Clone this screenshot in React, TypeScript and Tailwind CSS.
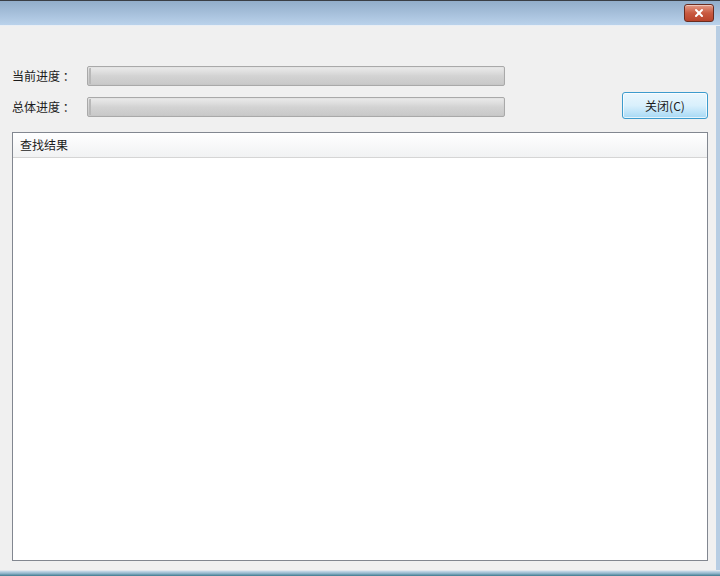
import { X } from "lucide-react";

const font = { fontFamily: '"Microsoft YaHei", "Noto Sans CJK SC", "Noto Sans", sans-serif' };

function Progress() {
  return (
    <div className="w-[418px] h-[20px] rounded-[2px] border border-[#a9a9a9] bg-gradient-to-b from-[#e4e4e4] via-[#d2d2d2] to-[#c6c6c6] p-px">
      <div className="h-full w-full rounded-[1px] border-l-2 border-[#b8b8b8] bg-gradient-to-b from-[#ececec]/60 via-[#d4d4d4]/40 to-[#cdcdcd]/40" />
    </div>
  );
}

export default function App() {
  return (
    <div
      className="w-[720px] h-[576px] flex flex-col overflow-hidden bg-[#f0f0f0] text-[12px] text-[#1b1b1b]"
      style={font}
    >
      {/* Title bar */}
      <div className="h-[25px] shrink-0 flex items-start justify-end border-t border-[#3a3e45] bg-gradient-to-b from-[#92adca] to-[#bad2eb] pr-[6px] pt-[3px]">
        <button className="w-[30px] h-[18px] flex items-center justify-center rounded-[3px] border border-[#6a2c20] bg-gradient-to-b from-[#e39a86] via-[#c95a41] to-[#b8432b] shadow-[inset_0_1px_0_rgba(255,255,255,0.45)]">
          <X className="w-[12px] h-[12px] text-white" strokeWidth={4} />
        </button>
      </div>
      <div className="h-px shrink-0 bg-[#e9eef4]" />

      {/* Body */}
      <div className="flex-1 flex flex-col border-r-[4px] border-[#b7cde3] pl-[12px] pr-[8px]">
        <div className="flex items-end justify-between pt-[40px]">
          <div className="flex flex-col gap-[11px]">
            <div className="flex items-center">
              <span className="w-[75px]">当前进度 ：</span>
              <Progress />
            </div>
            <div className="flex items-center">
              <span className="w-[75px]">总体进度 ：</span>
              <Progress />
            </div>
          </div>
          <button className="w-[86px] h-[27px] mb-[-2px] rounded-[3px] border border-[#3c9bcd] bg-gradient-to-b from-[#eaf6fd] via-[#d9f0fc] to-[#a7d9f5] shadow-[inset_0_0_0_1px_rgba(255,255,255,0.7)] text-[12px]">
            关闭(C)
          </button>
        </div>

        <div className="mt-[15px] h-[429px] flex flex-col border border-[#828790] bg-white">
          <div className="h-[25px] flex items-center px-[7px] border-b border-[#d5d5d5] bg-gradient-to-b from-[#ffffff] to-[#f1f2f3]">
            查找结果
          </div>
          <div className="flex-1" />
        </div>
      </div>

      {/* Bottom frame */}
      <div className="h-[6px] shrink-0 border-t border-[#dfe6ec] bg-gradient-to-b from-[#c9dbea] via-[#8fb4c9] to-[#3d7a8f]" />
    </div>
  );
}
